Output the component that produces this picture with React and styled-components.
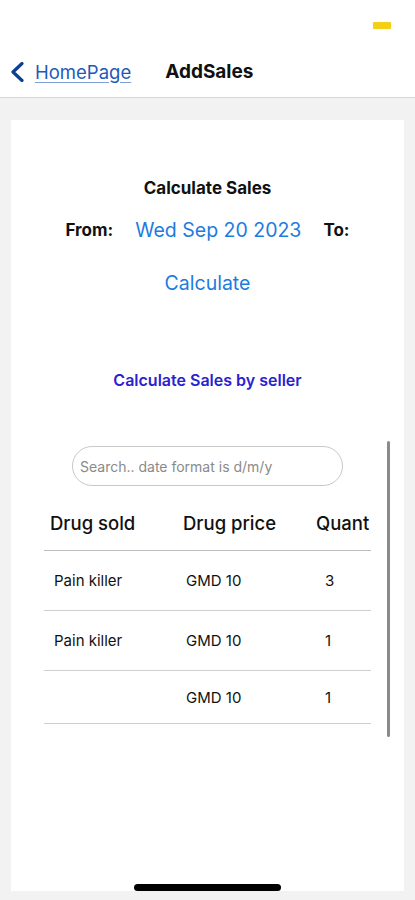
import React from "react";
import styled, { createGlobalStyle } from "styled-components";

const GlobalStyle = createGlobalStyle`
  body {
    margin: 0;
    background: #f2f2f2;
    font-family: "Inter", "Liberation Sans", sans-serif;
  }
`;

const Screen = styled.div`
  position: relative;
  width: 415px;
  height: 900px;
  display: flex;
  flex-direction: column;
  background: #f2f2f2;
  overflow: hidden;
`;

const StatusBar = styled.div`
  height: 48px;
  background: #fff;
  display: flex;
  justify-content: flex-end;
  align-items: flex-start;
  padding: 22px 24px 0 0;
  box-sizing: border-box;
`;

const Battery = styled.div`
  width: 18px;
  height: 7px;
  border-radius: 1px;
  background: #f5cf16;
`;

const NavBar = styled.div`
  height: 50px;
  background: #fff;
  border-bottom: 1px solid #d6d6d6;
  display: flex;
  align-items: center;
  padding-left: 10px;
  padding-bottom: 2px;
  box-sizing: border-box;
`;

const BackLink = styled.a`
  display: flex;
  align-items: center;
  gap: 11px;
  color: #1d5bb8;
  font-size: 18.5px;
  text-decoration: underline;
  text-decoration-color: #7d9fd6;
  text-underline-offset: 3px;
`;

const NavTitle = styled.div`
  margin-left: 34px;
  font-size: 19px;
  font-weight: 700;
  color: #111;
`;

const Content = styled.div`
  flex: 1;
  display: flex;
  padding: 22px 11px 9px;
`;

const Card = styled.div`
  flex: 1;
  background: #fff;
  display: flex;
  flex-direction: column;
  align-items: center;
  padding-top: 58px;
`;

const Heading = styled.div`
  font-size: 17px;
  font-weight: 700;
  line-height: 20px;
  color: #111;
`;

const DateRow = styled.div`
  margin-top: 19px;
  height: 26px;
  display: flex;
  align-items: center;
  gap: 22px;
`;

const Label = styled.span`
  font-size: 17px;
  font-weight: 700;
  color: #111;
`;

const BlueText = styled.span`
  font-size: 19.5px;
  color: #1c7be0;
  line-height: 24px;
`;

const CalcButton = styled(BlueText)`
  margin-top: 28px;
`;

const SellerLink = styled.div`
  margin-top: 75px;
  font-size: 16px;
  font-weight: 600;
  line-height: 20px;
  color: #2a22cf;
`;

const TableArea = styled.div`
  position: relative;
  align-self: flex-start;
  margin: 51px 0 0 33px;
  width: 346px;
  padding: 5px 0 13px;
`;

const ScrollThumb = styled.div`
  position: absolute;
  right: 0;
  top: 0;
  bottom: 0;
  width: 3px;
  border-radius: 2px;
  background: #8a8a8a;
`;

const Search = styled.input`
  display: block;
  margin-left: 28px;
  width: 271px;
  height: 40px;
  box-sizing: border-box;
  border: 1px solid #c8c8c8;
  border-radius: 20px;
  padding: 0 7px;
  font-family: inherit;
  font-size: 14px;
  outline: none;
  &::placeholder {
    color: #8a8a8a;
  }
`;

const Table = styled.div`
  width: 327px;
  overflow: hidden;
  margin-top: 10px;
`;

const Row = styled.div`
  display: grid;
  grid-template-columns: 133px 133px 133px;
  width: 399px;
  height: ${(p) => p.h}px;
  align-items: center;
  border-bottom: 1px solid ${(p) => (p.head ? "#bdbdbd" : "#cfcfcf")};
  box-sizing: border-box;
`;

const HeadCell = styled.div`
  font-size: 18.5px;
  font-weight: 500;
  color: #111;
  padding-left: ${(p) => p.pl}px;
  white-space: nowrap;
`;

const Cell = styled.div`
  font-size: 15px;
  color: #111;
  padding-left: ${(p) => p.pl}px;
`;

const HomeIndicator = styled.div`
  position: absolute;
  left: 134px;
  bottom: 9px;
  width: 147px;
  height: 7px;
  border-radius: 4px;
  background: #000;
`;

const rows = [
  { name: "Pain killer", price: "GMD 10", qty: "3", h: 60 },
  { name: "Pain killer", price: "GMD 10", qty: "1", h: 60 },
  { name: "", price: "GMD 10", qty: "1", h: 53 },
];

const App = () => {
  return (
    <Screen>
      <GlobalStyle />
      <StatusBar>
        <Battery />
      </StatusBar>
      <NavBar>
        <BackLink>
          <svg width="14" height="20" viewBox="0 0 14 20">
            <polyline
              points="12,1.5 3,10 12,18.5"
              fill="none"
              stroke="#0d3f94"
              strokeWidth="3.2"
              strokeLinecap="round"
              strokeLinejoin="round"
            />
          </svg>
          HomePage
        </BackLink>
        <NavTitle>AddSales</NavTitle>
      </NavBar>
      <Content>
        <Card>
          <Heading>Calculate Sales</Heading>
          <DateRow>
            <Label>From:</Label>
            <BlueText>Wed Sep 20 2023</BlueText>
            <Label>To:</Label>
          </DateRow>
          <CalcButton>Calculate</CalcButton>
          <SellerLink>Calculate Sales by seller</SellerLink>
          <TableArea>
            <ScrollThumb />
            <Search placeholder="Search.. date format is d/m/y" />
            <Table>
              <Row h={55} head>
                <HeadCell pl={6}>Drug sold</HeadCell>
                <HeadCell pl={6}>Drug price</HeadCell>
                <HeadCell pl={6}>Quant</HeadCell>
              </Row>
              {rows.map((r, i) => (
                <Row key={i} h={r.h}>
                  <Cell pl={10}>{r.name}</Cell>
                  <Cell pl={9}>{r.price}</Cell>
                  <Cell pl={15}>{r.qty}</Cell>
                </Row>
              ))}
            </Table>
          </TableArea>
        </Card>
      </Content>
      <HomeIndicator />
    </Screen>
  );
};

export default App;
